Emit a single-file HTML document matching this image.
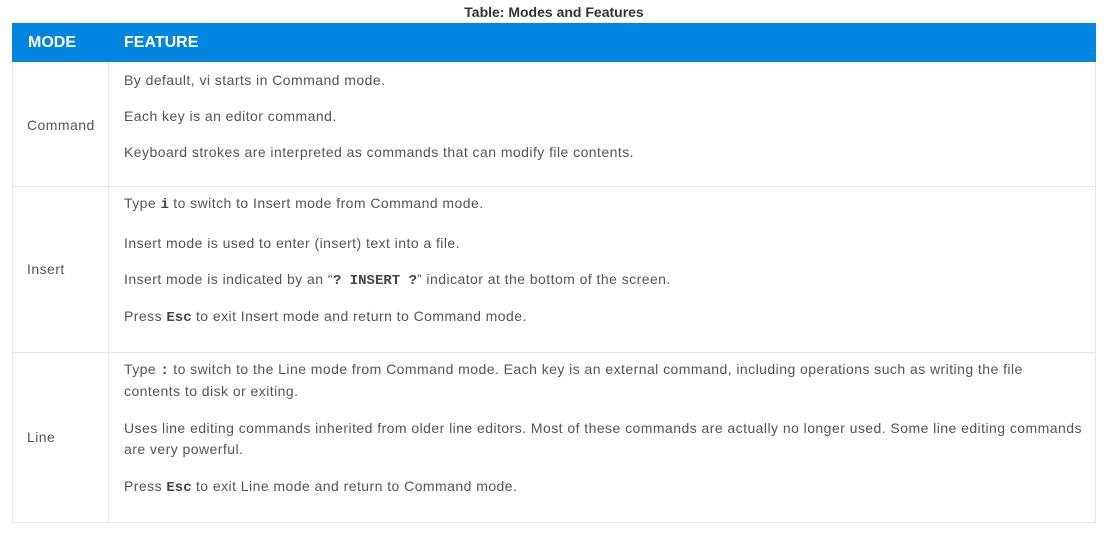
<!DOCTYPE html>
<html><head><meta charset="utf-8"><style>
body{margin:0;width:1112px;height:534px;background:#fff;font-family:"Liberation Sans",sans-serif;color:#555;position:relative;overflow:hidden}
.a{position:absolute;white-space:nowrap;font-size:14px;line-height:22px;letter-spacing:0.45px}
.t{position:absolute;left:0;width:1108px;top:4px;text-align:center;font-size:14px;font-weight:bold;color:#333}
.hd{position:absolute;left:12px;top:23px;width:1084px;height:39px;background:#0086e0}
.h{position:absolute;top:23px;line-height:39px;color:#fff;font-weight:bold;font-size:16px}
.box{position:absolute;left:12px;width:1082px;border:1px solid #e6e6e6;border-top:none}
.v{position:absolute;left:108px;top:62px;width:1px;height:460px;background:#e6e6e6}
code{font-family:"Liberation Mono",monospace;font-weight:bold;color:#444;letter-spacing:0}
</style></head><body>
<div class="t">Table: Modes and Features</div>
<div class="hd"></div>
<div class="h" style="left:28px">MODE</div>
<div class="h" style="left:124px">FEATURE</div>
<div class="box" style="top:62px;height:124px"></div>
<div class="box" style="top:186px;height:166px"></div>
<div class="box" style="top:352px;height:170px"></div>
<div class="v"></div>
<div class="a" style="left:27px;top:114px">Command</div>
<div class="a" style="left:27px;top:258px">Insert</div>
<div class="a" style="left:27px;top:426px">Line</div>
<div class="a" style="left:124px;top:69px">By default, vi starts in Command mode.</div>
<div class="a" style="left:124px;top:105px">Each key is an editor command.</div>
<div class="a" style="left:124px;top:141px">Keyboard strokes are interpreted as commands that can modify file contents.</div>
<div class="a" style="left:124px;top:192px">Type <code>i</code> to switch to Insert mode from Command mode.</div>
<div class="a" style="left:124px;top:232px">Insert mode is used to enter (insert) text into a file.</div>
<div class="a" style="left:124px;top:268px">Insert mode is indicated by an “<code>? INSERT ?</code>” indicator at the bottom of the screen.</div>
<div class="a" style="left:124px;top:305px">Press <code>Esc</code> to exit Insert mode and return to Command mode.</div>
<div class="a" style="left:124px;top:358px">Type <code>:</code> to switch to the Line mode from Command mode. Each key is an external command, including operations such as writing the file</div>
<div class="a" style="left:124px;top:380px">contents to disk or exiting.</div>
<div class="a" style="left:124px;top:417px">Uses line editing commands inherited from older line editors. Most of these commands are actually no longer used. Some line editing commands</div>
<div class="a" style="left:124px;top:438px">are very powerful.</div>
<div class="a" style="left:124px;top:475px">Press <code>Esc</code> to exit Line mode and return to Command mode.</div>
</body></html>
